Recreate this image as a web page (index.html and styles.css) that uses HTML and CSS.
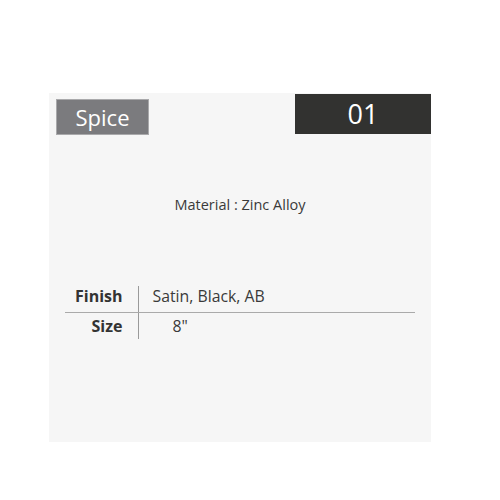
FILE: index.html
```html
<!DOCTYPE html>
<html>
<head>
<meta charset="utf-8">
<link rel="stylesheet" href="styles.css">
</head>
<body>
<div class="panel">
  <div class="header">
    <div class="tag">Spice</div>
    <div class="num">01</div>
  </div>
  <p class="material">Material : Zinc Alloy</p>
  <table class="specs">
    <tr class="row-first">
      <th>Finish</th>
      <td>Satin, Black, AB</td>
    </tr>
    <tr>
      <th>Size</th>
      <td class="indent">8"</td>
    </tr>
  </table>
</div>
</body>
</html>
```
FILE: styles.css
```css
html, body {
  margin: 0;
  padding: 0;
  background: #ffffff;
}
body {
  font-family: "Open Sans", "Noto Sans", sans-serif;
  color: #333333;
}
.panel {
  position: relative;
  margin: 93px 0 0 49px;
  width: 382px;
  height: 349px;
  background: #f6f6f6;
  box-sizing: border-box;
}
.header {
  display: flex;
  justify-content: space-between;
  align-items: flex-start;
}
.tag {
  margin: 6px 0 0 7px;
  width: 93px;
  height: 36px;
  box-sizing: border-box;
  border: 1px solid #a9a9ab;
  background: #7b7b7e;
  color: #ffffff;
  font-size: 22px;
  line-height: 34px;
  text-align: center;
}
.num {
  margin-top: 1px;
  width: 136px;
  height: 40px;
  background: #323230;
  color: #ffffff;
  font-size: 27px;
  line-height: 40px;
  text-align: center;
}
.material {
  margin: 60px 0 0 0;
  text-align: center;
  font-size: 14.5px;
  line-height: 20px;
  color: #3a3a3a;
}
.specs {
  margin: 71px 0 0 16px;
  width: 350px;
  border-collapse: collapse;
}
.specs th, .specs td {
  height: 26px;
  padding: 0;
  font-size: 16px;
  line-height: 26px;
}
.specs th {
  width: 73px;
  text-align: right;
  padding-right: 15px;
  box-sizing: border-box;
  font-weight: 700;
  color: #333333;
  border-right: 1px solid #9a9a9a;
}
.specs td {
  padding-left: 14px;
  text-align: left;
  font-size: 15.8px;
  color: #3a3a3a;
}
.specs td.indent {
  padding-left: 34px;
}
.row-first th, .row-first td {
  border-bottom: 1px solid #aaaaaa;
  vertical-align: top;
  line-height: 21px;
}
```
